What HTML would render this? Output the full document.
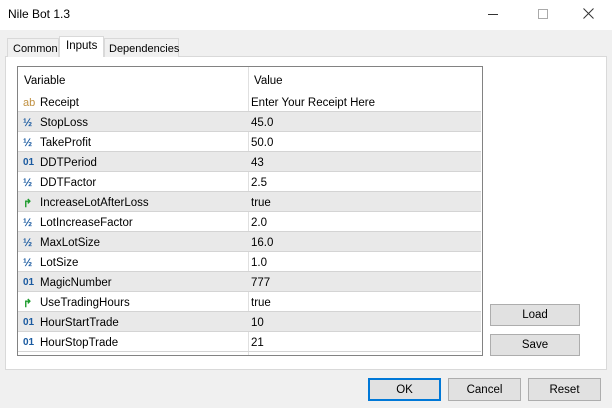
<!DOCTYPE html>
<html><head><style>
*{margin:0;padding:0;box-sizing:border-box}
body{width:612px;height:408px;background:#f0f0f0;font-family:"Liberation Sans",sans-serif;font-size:11.5px;color:#000;position:relative;overflow:hidden}
.abs{position:absolute}
.title{left:0;top:0;width:612px;height:30px;background:#fff}
.btn{position:absolute;background:#e1e1e1;border:1px solid #adadad;text-align:center;font-size:11.5px}
.row{position:absolute;left:18px;width:463px;height:20px;border-bottom:1px solid #d4d4d4}
.row span{position:absolute;top:5px}
.g{background:#e9e9e9}
.ic{position:absolute;left:5px;top:4px;font-size:11px;font-weight:bold}
</style></head><body>
<div class="abs title"></div>
<div class="abs" style="left:8px;top:7px;font-size:12px">Nile Bot 1.3</div>
<div class="abs" style="left:488px;top:14px;width:10px;height:1px;background:#333"></div>
<div class="abs" style="left:538px;top:9px;width:10px;height:10px;border:1px solid #aaa"></div>
<svg class="abs" style="left:583px;top:8px" width="11" height="11"><path d="M0.5 0.5L10.5 10.5M10.5 0.5L0.5 10.5" stroke="#333" stroke-width="1"/></svg>
<div class="abs" style="left:5px;top:56px;width:602px;height:314px;background:#fff;border:1px solid #d9d9d9"></div>
<div class="abs" style="left:7px;top:38px;width:52px;height:19px;background:#f0f0f0;border:1px solid #d9d9d9;border-bottom:none;padding:4px 0 0 5px;font-size:11px">Common</div>
<div class="abs" style="left:59px;top:36px;width:45px;height:21px;background:#fff;border:1px solid #d9d9d9;border-bottom:none;padding:3px 0 0 6px">Inputs</div>
<div class="abs" style="left:104px;top:38px;width:75px;height:19px;background:#f0f0f0;border:1px solid #d9d9d9;border-bottom:none;padding:4px 0 0 4px;font-size:11px">Dependencies</div>
<div class="abs" style="left:17px;top:66px;width:466px;height:290px;border:1px solid #828282;background:#fff"></div>
<div class="abs" style="left:248px;top:67px;width:1px;height:288px;background:#e0e0e0"></div>
<div class="abs" style="left:24px;top:75px">Variable</div>
<div class="abs" style="left:254px;top:75px">Value</div>
<div class="row" style="top:92px"><span class="ic" style="color:#c09040;font-weight:normal">ab</span><span style="left:22px">Receipt</span><span style="left:233px">Enter Your Receipt Here</span></div>
<div class="row g" style="top:112px"><span class="ic" style="color:#1a5aa0">½</span><span style="left:22px">StopLoss</span><span style="left:233px">45.0</span></div>
<div class="row" style="top:132px"><span class="ic" style="color:#1a5aa0">½</span><span style="left:22px">TakeProfit</span><span style="left:233px">50.0</span></div>
<div class="row g" style="top:152px"><span class="ic" style="color:#1a5aa0;font-size:10px">01</span><span style="left:22px">DDTPeriod</span><span style="left:233px">43</span></div>
<div class="row" style="top:172px"><span class="ic" style="color:#1a5aa0">½</span><span style="left:22px">DDTFactor</span><span style="left:233px">2.5</span></div>
<div class="row g" style="top:192px"><span class="ic" style="color:#1a9a2a">↱</span><span style="left:22px">IncreaseLotAfterLoss</span><span style="left:233px">true</span></div>
<div class="row" style="top:212px"><span class="ic" style="color:#1a5aa0">½</span><span style="left:22px">LotIncreaseFactor</span><span style="left:233px">2.0</span></div>
<div class="row g" style="top:232px"><span class="ic" style="color:#1a5aa0">½</span><span style="left:22px">MaxLotSize</span><span style="left:233px">16.0</span></div>
<div class="row" style="top:252px"><span class="ic" style="color:#1a5aa0">½</span><span style="left:22px">LotSize</span><span style="left:233px">1.0</span></div>
<div class="row g" style="top:272px"><span class="ic" style="color:#1a5aa0;font-size:10px">01</span><span style="left:22px">MagicNumber</span><span style="left:233px">777</span></div>
<div class="row" style="top:292px"><span class="ic" style="color:#1a9a2a">↱</span><span style="left:22px">UseTradingHours</span><span style="left:233px">true</span></div>
<div class="row g" style="top:312px"><span class="ic" style="color:#1a5aa0;font-size:10px">01</span><span style="left:22px">HourStartTrade</span><span style="left:233px">10</span></div>
<div class="row" style="top:332px"><span class="ic" style="color:#1a5aa0;font-size:10px">01</span><span style="left:22px">HourStopTrade</span><span style="left:233px">21</span></div>
<div class="btn" style="left:490px;top:304px;width:90px;height:22px;padding-top:4px">Load</div>
<div class="btn" style="left:490px;top:334px;width:90px;height:22px;padding-top:4px">Save</div>
<div class="btn" style="left:368px;top:378px;width:73px;height:23px;padding-top:4px;border:2px solid #0078d7">OK</div>
<div class="btn" style="left:448px;top:378px;width:73px;height:23px;padding-top:5px">Cancel</div>
<div class="btn" style="left:528px;top:378px;width:73px;height:23px;padding-top:5px">Reset</div>
</body></html>
